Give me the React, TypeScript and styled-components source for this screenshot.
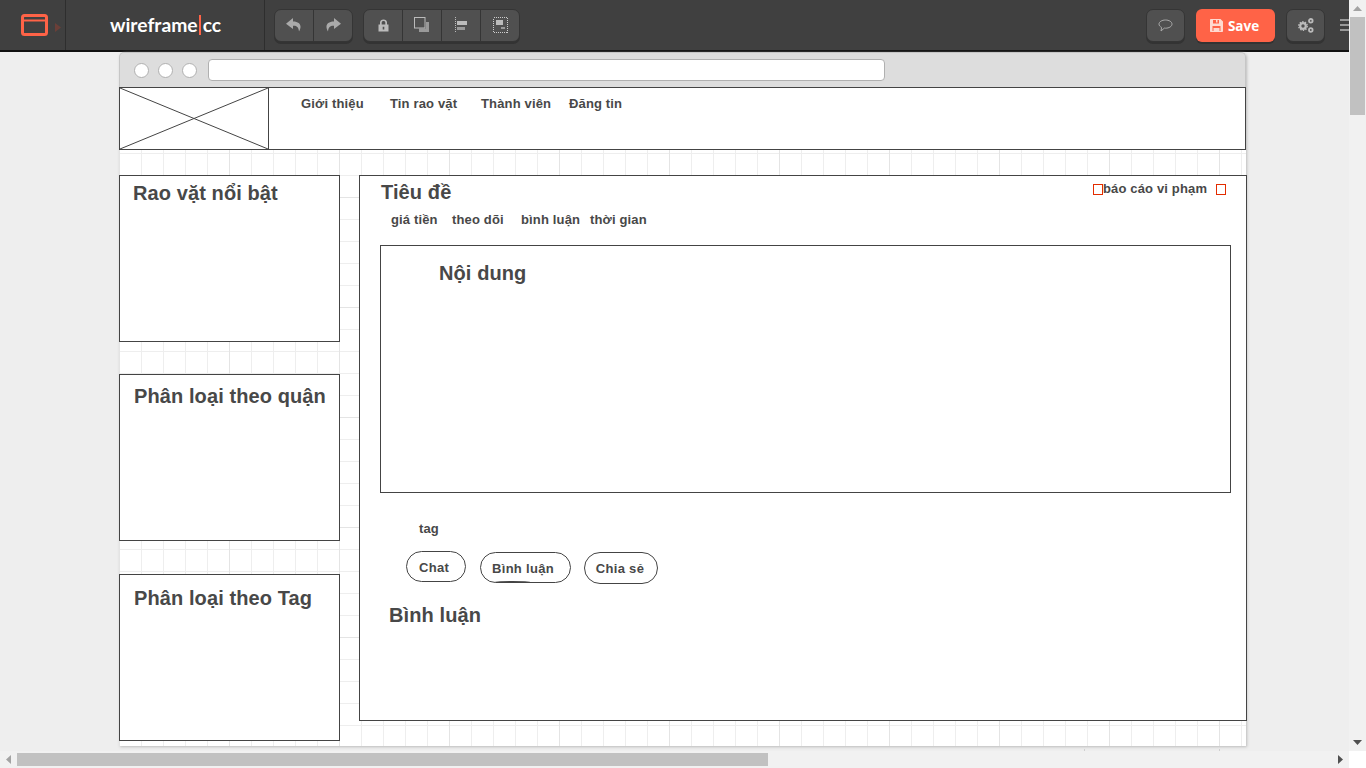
import React from 'react';
import styled, { createGlobalStyle } from 'styled-components';

const Global = createGlobalStyle`
  html, body { margin: 0; padding: 0; height: 100%; overflow: hidden; background: #eee; }
  #root { height: 100%; }
  * { box-sizing: border-box; }
`;

const Page = styled.div`
  width: 1366px;
  height: 768px;
  display: grid;
  grid-template-columns: 1349px 17px;
  grid-template-rows: 751px 17px;
  overflow: hidden;
  font-family: "Liberation Sans", Arial, sans-serif;
  background: #eee;
`;

const Main = styled.div`
  display: flex;
  flex-direction: column;
  overflow: hidden;
  min-width: 0;
`;

const Toolbar = styled.header`
  height: 52px;
  flex: none;
  width: 1366px;
  background: #404040;
  border-bottom: 2px solid #111;
  display: flex;
  align-items: flex-start;
`;

const LogoCell = styled.div`
  width: 66px;
  height: 50px;
  padding: 14px 0 0 21px;
  border-right: 1px solid #2e2e2e;
  display: flex;
  align-items: flex-start;
  gap: 7px;
`;

const Brand = styled.div`
  width: 199px;
  height: 50px;
  border-right: 1px solid #2e2e2e;
  padding: 12px 0 0 44px;
  font: 700 19.3px/26px Lato, "Open Sans", sans-serif;
  color: #fff;
  display: flex;
`;

const BrandBar = styled.span`
  display: block;
  flex: none;
  width: 2px;
  height: 20px;
  margin: 3px 2px 0 1px;
  background: #ff6347;
`;

const Tools = styled.div`
  flex: 1;
  display: flex;
  padding: 9px 0 0 9px;
  gap: 10px;
`;

const ButtonGroup = styled.div`
  display: flex;
  height: 33px;
  border-radius: 7px;
  background: #505050;
  border: 1px solid #353535;
  box-shadow: 0 2px 0 #333;
  overflow: hidden;
`;

const ToolButton = styled.div`
  width: 39px;
  height: 31px;
  display: flex;
  align-items: center;
  justify-content: center;
  padding-bottom: 1px;
  border-left: 1px solid #353535;
  &:first-child { border-left: 0; width: 38px; }
`;

const RightTools = styled.div`
  display: flex;
  padding: 9px 0 0 0;
  width: 220px;
  flex: none;
  gap: 11px;
`;

const IconButton = styled.div`
  width: 39px;
  height: 33px;
  border-radius: 7px;
  background: #505050;
  border: 1px solid #353535;
  box-shadow: 0 2px 0 #333;
  display: flex;
  align-items: center;
  justify-content: center;
  padding-bottom: 1px;
`;

const SaveButton = styled.div`
  width: 79px;
  height: 33px;
  border-radius: 6px;
  background: #ff6347;
  box-shadow: 0 2px 0 #333;
  color: #fff;
  display: flex;
  align-items: center;
  justify-content: center;
  gap: 5px;
  padding-right: 2px;
  font: 700 13.5px "Open Sans", sans-serif;
`;

const Menu = styled.div`
  margin: 10px 0 0 4px;
  flex: none;
  width: 14px;
  height: 12px;
  border-top: 2px solid #999;
  border-bottom: 2px solid #999;
  position: relative;
  &::after {
    content: "";
    position: absolute;
    left: 0;
    right: 0;
    top: 3px;
    height: 2px;
    background: #999;
  }
`;

const Workspace = styled.div`
  flex: 1;
  padding-left: 119px;
`;

const Frame = styled.div`
  position: relative;
  width: 1127px;
  height: 694px;
  display: flex;
  flex-direction: column;
  box-shadow: 1px 1px 3px #bbb;
  border-radius: 5px 5px 0 0;
`;

const RulerTick = styled.span<{ $x: number }>`
  position: absolute;
  left: ${p => p.$x}px;
  bottom: -5px;
  width: 1px;
  height: 2px;
  background: #cfcfcf;
`;

const ChromeBar = styled.div`
  height: 35px;
  flex: none;
  background: #ddd;
  border: 1px solid #c6c6c6;
  border-bottom: 0;
  border-radius: 5px 5px 0 0;
  display: flex;
  align-items: center;
  padding: 0 0 0 14px;
  gap: 9px;
`;

const Dot = styled.span`
  width: 15px;
  height: 15px;
  border-radius: 50%;
  background: #fff;
  border: 1px solid #b0b0b0;
  flex: none;
`;

const Address = styled.div`
  width: 677px;
  height: 22px;
  background: #fff;
  border: 1px solid #b0b0b0;
  border-radius: 4px;
  margin-left: 2px;
`;

const Canvas = styled.div`
  position: relative;
  flex: 1;
  background-color: #fff;
  background-image:
    linear-gradient(to right, #e4e4e4 1px, transparent 1px),
    linear-gradient(to bottom, #e4e4e4 1px, transparent 1px),
    linear-gradient(to right, #eee 1px, transparent 1px),
    linear-gradient(to bottom, #eee 1px, transparent 1px);
  background-size: 110px 110px, 110px 110px, 22px 22px, 22px 22px;
`;

const Box = styled.div<{ $x: number; $y: number; $w: number; $h: number }>`
  position: absolute;
  left: ${p => p.$x}px;
  top: ${p => p.$y}px;
  width: ${p => p.$w}px;
  height: ${p => p.$h}px;
  background: #fff;
  border: 1px solid #444;
`;

const Label = styled.div<{ $x: number; $y: number; $size?: number }>`
  position: absolute;
  left: ${p => p.$x}px;
  top: ${p => p.$y}px;
  font-size: ${p => p.$size ?? 13}px;
  line-height: 1.15;
  font-weight: 700;
  color: #484848;
  white-space: nowrap;
  letter-spacing: ${p => ((p.$size ?? 13) > 15 ? 0.1 : 0.15)}px;
`;

const Pill = styled.div<{ $x: number; $y: number; $w: number; $h: number; $shift: number }>`
  position: absolute;
  left: ${p => p.$x}px;
  top: ${p => p.$y}px;
  width: ${p => p.$w}px;
  height: ${p => p.$h}px;
  border: 1px solid #444;
  border-radius: 16px;
  background: #fff;
  display: flex;
  align-items: center;
  justify-content: center;
  font-size: 13px;
  font-weight: 700;
  color: #484848;
  letter-spacing: 0.3px;
  padding: 1px ${p => p.$shift}px 0 0;
`;

const PillUnderline = styled.span`
  position: absolute;
  left: 14px;
  width: 35px;
  bottom: -1px;
  height: 2px;
  border-radius: 50%;
  background: #444;
`;

const Handle = styled.div<{ $x: number; $y: number }>`
  position: absolute;
  left: ${p => p.$x}px;
  top: ${p => p.$y}px;
  width: 10px;
  height: 11px;
  border: 1px solid #e32c00;
  background: #fff;
`;

const CrossSvg = styled.svg`
  position: absolute;
  left: 0;
  top: 0;
  display: block;
`;

const ScrollV = styled.div`
  grid-column: 2;
  grid-row: 1;
  background: #f1f1f1;
  display: flex;
  flex-direction: column;
  align-items: center;
  z-index: 1;
`;

const ThumbV = styled.div`
  width: 15px;
  height: 98px;
  flex: none;
  background: #c1c1c1;
`;

const Arrow = styled.div`
  height: 17px;
  width: 17px;
  flex: none;
  display: flex;
  align-items: center;
  justify-content: center;
`;

const Spacer = styled.div`
  flex: 1;
`;

const ScrollH = styled.div`
  grid-column: 1;
  grid-row: 2;
  background: #f1f1f1;
  display: flex;
  align-items: center;
`;

const ThumbH = styled.div`
  width: 751px;
  height: 13px;
  flex: none;
  background: #c1c1c1;
`;

const Corner = styled.div`
  grid-column: 2;
  grid-row: 2;
  background: #fff;
`;

const Boxes = () => (
  <>
    <Box $x={0} $y={0} $w={150} $h={63}>
      <CrossSvg width="148" height="61" viewBox="0 0 148 61">
        <path d="M0 0L148 61M148 0L0 61" stroke="#444" strokeWidth="1" fill="none" />
      </CrossSvg>
    </Box>
    <Box $x={149} $y={0} $w={978} $h={63} />
    <Label $x={182} $y={10}>Giới thiệu</Label>
    <Label $x={271} $y={10}>Tin rao vặt</Label>
    <Label $x={362} $y={10}>Thành viên</Label>
    <Label $x={450} $y={10}>Đăng tin</Label>

    <Box $x={0} $y={88} $w={221} $h={167} />
    <Label $x={14} $y={95} $size={20}>Rao vặt nổi bật</Label>
    <Box $x={0} $y={287} $w={221} $h={167} />
    <Label $x={15} $y={298} $size={20}>Phân loại theo quận</Label>
    <Box $x={0} $y={487} $w={221} $h={167} />
    <Label $x={15} $y={500} $size={20}>Phân loại theo Tag</Label>

    <Box $x={240} $y={88} $w={888} $h={546} />
    <Label $x={262} $y={94} $size={20}>Tiêu đề</Label>
    <Label $x={272} $y={126}>giá tiền</Label>
    <Label $x={333} $y={126}>theo dõi</Label>
    <Label $x={402} $y={126}>bình luận</Label>
    <Label $x={471} $y={126}>thời gian</Label>
    <Handle $x={974} $y={97} />
    <Label $x={984} $y={95}>báo cáo vi phạm</Label>
    <Handle $x={1097} $y={97} />

    <Box $x={261} $y={158} $w={851} $h={248} />
    <Label $x={320} $y={175} $size={20}>Nội dung</Label>

    <Label $x={300} $y={435}>tag</Label>
    <Pill $x={287} $y={464} $w={60} $h={31} $shift={4}>Chat</Pill>
    <Pill $x={361} $y={465} $w={91} $h={31} $shift={5}>Bình luận<PillUnderline /></Pill>
    <Pill $x={465} $y={465} $w={74} $h={32} $shift={2}>Chia sẻ</Pill>
    <Label $x={270} $y={517} $size={20}>Bình luận</Label>
  </>
);

const Icon = {
  Window: () => (
    <svg width="27" height="22" viewBox="0 0 27 22" fill="none">
      <rect x="1.5" y="1.5" width="24" height="19" rx="2" stroke="#ff6347" strokeWidth="3" />
      <path d="M2 6.5H25" stroke="#ff6347" strokeWidth="2" />
    </svg>
  ),
  Caret: () => (
    <svg width="6" height="9" viewBox="0 0 6 9" style={{ marginTop: 9 }}>
      <path d="M0 0L6 4.5L0 9Z" fill="#6b3f38" />
    </svg>
  ),
  Undo: () => (
    <svg width="16" height="14" viewBox="0 0 16 14">
      <path d="M7 0L0 5.8L7 11V7.8C10.5 7.5 12.5 9 13 13.5C16.2 8 14.5 3.5 7 3.4Z" fill="#aaa" />
    </svg>
  ),
  Redo: () => (
    <svg width="16" height="14" viewBox="0 0 16 14">
      <path d="M9 0L16 5.8L9 11V7.8C5.5 7.5 3.5 9 3 13.5C-0.2 8 1.5 3.5 9 3.4Z" fill="#aaa" />
    </svg>
  ),
  Lock: () => (
    <svg width="11" height="13" viewBox="0 0 11 13">
      <path fillRule="evenodd" d="M2 5.5V3.6C2 1.6 3.5 0.5 5.5 0.5S9 1.6 9 3.6V5.5H10.5V12.5H0.5V5.5ZM3.7 5.5H7.3V3.8C7.3 2.7 6.6 2.1 5.5 2.1S3.7 2.7 3.7 3.8ZM4.7 7.8V10.4H6.3V7.8Z" fill="#bbb" />
    </svg>
  ),
  Layer: () => (
    <svg width="16" height="16" viewBox="0 0 16 16" fill="none">
      <path d="M12 5H15V15H5V11.5H12Z" fill="#999" />
      <rect x="0.5" y="0.5" width="10.5" height="10.5" stroke="#bbb" />
    </svg>
  ),
  Align: () => (
    <svg width="13" height="16" viewBox="0 0 13 16" shapeRendering="crispEdges">
      <path d="M0.5 0V16" stroke="#bbb" strokeDasharray="1 1" />
      <rect x="2" y="4" width="10" height="4" fill="#bbb" />
      <rect x="2" y="10" width="8" height="3" fill="#999" />
    </svg>
  ),
  Group: () => (
    <svg width="15" height="16" viewBox="0 0 15 16" fill="none" shapeRendering="crispEdges">
      <rect x="0.5" y="0.5" width="14" height="15" stroke="#ccc" strokeDasharray="1 1" />
      <rect x="3" y="3" width="7" height="5" fill="#bbb" />
      <rect x="8" y="10" width="4" height="2" fill="#999" />
    </svg>
  ),
  Chat: () => (
    <svg width="15" height="13" viewBox="0 0 15 13" fill="none">
      <path d="M7.5 1C3.9 1 1 2.8 1 5.1C1 6.5 2 7.6 3.6 8.4L3 12L6.4 9.1C6.8 9.2 7.1 9.2 7.5 9.2C11.1 9.2 14 7.4 14 5.1S11.1 1 7.5 1Z" stroke="#aaa" strokeWidth="1" />
    </svg>
  ),
  Disk: () => (
    <svg width="13" height="13" viewBox="0 0 13 13">
      <path fill="#ffd9d0" fillRule="evenodd" d="M0 1C0 0.4 0.4 0 1 0H10.5L13 2.5V12C13 12.6 12.6 13 12 13H1C0.4 13 0 12.6 0 12ZM3 1V4.5H9V1H7.5V3.5H6V1ZM2.5 7V12H10.5V7Z" />
      <rect x="3.5" y="9" width="6" height="3" fill="#ffd9d0" />
    </svg>
  ),
  Gears: () => (
    <svg width="16" height="15" viewBox="0 0 16 15" fill="none" stroke="#bbb">
      <circle cx="5" cy="8" r="2.8" strokeWidth="2.2" />
      <circle cx="5" cy="8" r="4.3" strokeWidth="1.3" strokeDasharray="1.4 1.3" />
      <circle cx="12.8" cy="2.8" r="1.8" strokeWidth="1.8" />
      <circle cx="12.8" cy="12" r="1.8" strokeWidth="1.8" />
    </svg>
  ),
  Up: () => <svg width="9" height="5" viewBox="0 0 9 5"><path d="M4.5 0L9 5H0Z" fill="#a3a3a3" /></svg>,
  Down: () => <svg width="9" height="5" viewBox="0 0 9 5"><path d="M4.5 5L9 0H0Z" fill="#505050" /></svg>,
  Left: () => <svg width="5" height="9" viewBox="0 0 5 9"><path d="M5 0V9L0 4.5Z" fill="#a3a3a3" /></svg>,
  Right: () => <svg width="5" height="9" viewBox="0 0 5 9"><path d="M0 0V9L5 4.5Z" fill="#505050" /></svg>,
};

export default function App() {
  return (
    <Page>
      <Global />
      <Main>
        <Toolbar>
          <LogoCell><Icon.Window /><Icon.Caret /></LogoCell>
          <Brand>wireframe<BrandBar />cc</Brand>
          <Tools>
            <ButtonGroup>
              <ToolButton><Icon.Undo /></ToolButton>
              <ToolButton><Icon.Redo /></ToolButton>
            </ButtonGroup>
            <ButtonGroup>
              <ToolButton><Icon.Lock /></ToolButton>
              <ToolButton><Icon.Layer /></ToolButton>
              <ToolButton><Icon.Align /></ToolButton>
              <ToolButton><Icon.Group /></ToolButton>
            </ButtonGroup>
          </Tools>
          <RightTools>
            <IconButton><Icon.Chat /></IconButton>
            <SaveButton><Icon.Disk />Save</SaveButton>
            <IconButton><Icon.Gears /></IconButton>
            <Menu />
          </RightTools>
        </Toolbar>
        <Workspace>
          <Frame>
            <ChromeBar>
              <Dot /><Dot /><Dot /><Address />
            </ChromeBar>
            <Canvas><Boxes /></Canvas>
            <RulerTick $x={965} />
            <RulerTick $x={1100} />
          </Frame>
        </Workspace>
      </Main>
      <ScrollV>
        <Arrow><Icon.Up /></Arrow>
        <ThumbV />
        <Spacer />
        <Arrow><Icon.Down /></Arrow>
      </ScrollV>
      <ScrollH>
        <Arrow><Icon.Left /></Arrow>
        <ThumbH />
        <Spacer />
        <Arrow><Icon.Right /></Arrow>
      </ScrollH>
      <Corner />
    </Page>
  );
}
